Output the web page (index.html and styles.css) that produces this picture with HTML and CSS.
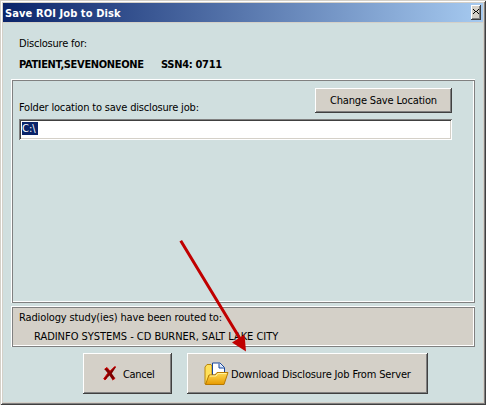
FILE: index.html
```html
<!DOCTYPE html>
<html lang="en">
<head>
<meta charset="utf-8">
<title>Save ROI Job to Disk</title>
<link rel="stylesheet" href="styles.css">
</head>
<body>
<main class="dialog">
  <header class="titlebar">
    <h1 class="title">Save ROI Job to Disk</h1>
    <button class="close" aria-label="Close">
      <svg width="6" height="5" viewBox="0 0 6 5" shape-rendering="crispEdges"><path d="M0 0h1v1h1v1h2V1h1V0h1v1H5v1H4v1h1v1h1v1H5V4H4V3H2v1H1v1H0V4h1V3h1V2H1V1H0z"/></svg>
    </button>
  </header>
  <section class="content">
    <p class="label intro">Disclosure for:</p>
    <div class="patient"><span class="name">PATIENT,SEVENONEONE</span><span class="ssn">SSN4: 0711</span></div>
    <section class="panel folder">
      <div class="folder-head">
        <span class="folder-label">Folder location to save disclosure job:</span>
        <button class="button change"><span class="change-text">Change Save Location</span></button>
      </div>
      <div class="field"><span class="selected">C:\</span></div>
    </section>
    <section class="panel routed">
      <p class="routed-title">Radiology study(ies) have been routed to:</p>
      <p class="routed-item">RADINFO SYSTEMS - CD BURNER, SALT LAKE CITY</p>
    </section>
    <footer class="actions">
      <button class="button cancel">
        <svg width="14" height="15" viewBox="0 0 14 15"><path d="M1.5 3.2L4 1.5 7 5.2 11.5.8 13 1 8.8 7.5 12.2 12.3 9.5 14 6.5 9.5 2 14 .7 12.8 4.8 7.2z" fill="#800000"/><path d="M1.5 3.2L4 1.5 7 5.2 11.5.8 13 1M4.8 7.2L.7 12.8 2 14 4 12M9.5 14l2.7-1.7" fill="none" stroke="#d80000"/></svg>
        <span class="cancel-text">Cancel</span>
      </button>
      <button class="button download">
        <svg width="25" height="24" viewBox="0 0 25 24">
          <defs><linearGradient id="gold" x2="0" y2="1"><stop stop-color="#ffdc58"/><stop offset="1" stop-color="#e79a00"/></linearGradient></defs>
          <path d="M1 22V5l2-2.5h4L8 4v10L3 21z" fill="#ffe05a" stroke="#b9860b"/>
          <path d="M8.5 13V1H16l4.5 4.5V11h-7l-2 2z" fill="#fff" stroke="#17479c"/>
          <path d="M15 1.5V6h5" fill="#d6e4fc" stroke="#17479c"/>
          <path d="M1.5 22.5L5 13h6l2-2.5h11l-4 12z" fill="url(#gold)" stroke="#b87900"/>
          <path d="M5.8 14H12l2-2.5h8.5" fill="none" stroke="#fff2a0"/>
        </svg>
        <span class="download-text">Download Disclosure Job From Server</span>
      </button>
    </footer>
  </section>
  <svg class="arrow" width="70" height="114" viewBox="0 0 70 114"><path d="M3.5 3L61 98" stroke="#c00000" stroke-width="3" stroke-linecap="square"/><path d="M68 112.5L54 103.5 66.5 95.5z" fill="#c00000"/></svg>
</main>
</body>
</html>
```
FILE: styles.css
```css
* { box-sizing: border-box; }
body { margin: 0; font: 11px/13px "DejaVu Sans Condensed", "DejaVu Sans", sans-serif; font-stretch: condensed; color: #000; }
h1, p { margin: 0; font-size: inherit; }
span, p, h1 { white-space: nowrap; }
svg { flex: none; display: block; }
button { font: inherit; color: inherit; padding: 0; }
.dialog {
  position: relative; width: 486px; height: 405px; padding: 3px;
  background: #d0dfdf;
  box-shadow: inset 1px 1px #d4d0c8, inset -1px -1px #404040, inset 2px 2px #fff, inset -2px -2px #808080, inset 3px 3px #d4d0c8, inset -3px -3px #d4d0c8;
}
.titlebar {
  height: 20px; display: flex; align-items: center; justify-content: space-between;
  padding: 0 2px 1px; border-bottom: 1px solid #d4d0c8;
  background: linear-gradient(90deg, #0a246a, #a6caf0);
}
.title { padding-top: 2px; color: #fff; font-weight: bold; letter-spacing: 0.1px; }
.close, .button {
  display: flex; align-items: center; border: 0; border-radius: 0; background: #d4d0c8;
  box-shadow: inset -1px -1px #404040, inset 1px 1px #fff, inset -2px -2px #808080;
}
.close { width: 10px; height: 15px; justify-content: center; padding: 0 2px 2px 1px; margin-top: 1px; }
.content { padding: 14px 8px 0; }
.intro { padding-left: 8px; letter-spacing: -0.2px; }
.patient { display: flex; gap: 18px; margin-top: 8px; padding-left: 8px; font-weight: bold; letter-spacing: -0.33px; }
.name { width: 124px; }
.ssn { letter-spacing: -0.3px; }
.panel {
  width: 464px;
  box-shadow: inset 1px 1px #fff, inset -1px -1px #808080, inset 2px 2px #808080, inset -2px -2px #fff;
}
.folder { height: 224px; margin-top: 8px; padding: 9px 23px 0 8px; }
.folder-head { height: 25px; display: flex; justify-content: space-between; align-items: flex-start; }
.folder-label { margin-top: 13px; letter-spacing: -0.18px; }
.change { width: 137px; height: 25px; padding-left: 15px; }
.change-text { letter-spacing: -0.17px; }
.field {
  height: 21px; margin-top: 6px; padding: 3px; background: #fff; display: flex;
  box-shadow: inset 1px 1px #808080, inset -1px -1px #fff, inset 2px 2px #404040, inset -2px -2px #d4d0c8;
}
.selected { width: 16px; height: 13px; background: #0a246a; color: #fff; }
.routed { height: 41px; margin-top: 3px; padding: 5px 8px; background: #d4d0c8; }
.routed-title { letter-spacing: -0.13px; }
.routed-item { margin-top: 6px; padding-left: 15px; letter-spacing: -0.03px; }
.actions { display: flex; gap: 15px; margin: 6px 0 0 72px; }
.cancel { width: 89px; height: 41px; padding-left: 20px; gap: 6px; }
.cancel-text { padding-top: 1px; letter-spacing: -0.35px; }
.download { width: 241px; height: 41px; padding-left: 17px; gap: 2px; }
.download-text { padding-top: 1px; letter-spacing: -0.15px; }
.arrow { position: absolute; left: 178px; top: 239px; }
```
